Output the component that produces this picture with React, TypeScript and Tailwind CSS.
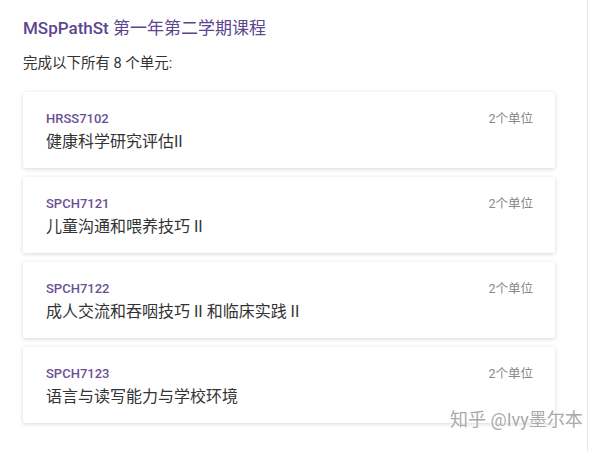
const courses = [
  { code: 'HRSS7102', title: '健康科学研究评估II' },
  { code: 'SPCH7121', title: '儿童沟通和喂养技巧 II' },
  { code: 'SPCH7122', title: '成人交流和吞咽技巧 II 和临床实践 II' },
  { code: 'SPCH7123', title: '语言与读写能力与学校环境' },
];

function CourseCard({ code, title }: { code: string; title: string }) {
  return (
    <div className="flex h-[76px] justify-between rounded-[2px] bg-white pl-[23px] pr-[22px] pt-[19px] shadow-[0_1px_4px_rgba(0,0,0,0.16)]">
      <div className="flex flex-col">
        <span className="text-[13px] font-medium leading-[16px] text-[#6b4f96]">{code}</span>
        <span className="mt-[4px] text-[16px] leading-[22px] text-[#333]">{title}</span>
      </div>
      <span className="text-[12.5px] leading-[16px] text-[#888]">2个单位</span>
    </div>
  );
}

export default function App() {
  return (
    <div
      className="relative flex h-[451px] w-[600px] overflow-hidden bg-white"
      style={{ fontFamily: 'Roboto, "Noto Sans CJK SC", sans-serif' }}
    >
      <div className="w-[588px] border-r border-[#e6e6e6] pl-[23px] pr-[32px] pt-[16px]">
        <h1 className="text-[17px] leading-[24px] text-[#5e4590]">
          <span className="font-medium">MSpPathSt</span> 第一年第二学期课程
        </h1>
        <p className="mt-[14px] text-[14.5px] leading-[20px] text-[#333]">完成以下所有 8 个单元:</p>
        <div className="mt-[18px] flex flex-col gap-[9px]">
          {courses.map((c) => (
            <CourseCard key={c.code} code={c.code} title={c.title} />
          ))}
        </div>
      </div>
      <div className="flex-1 bg-white" />
      {/* watermark */}
      <span
        className="absolute left-[450px] top-[408px] text-[18px] leading-[24px] text-[#aaa]"
        style={{ textShadow: '0 0 2px #fff, 0 0 2px #fff' }}
      >
        知乎 @Ivy墨尔本
      </span>
    </div>
  );
}
